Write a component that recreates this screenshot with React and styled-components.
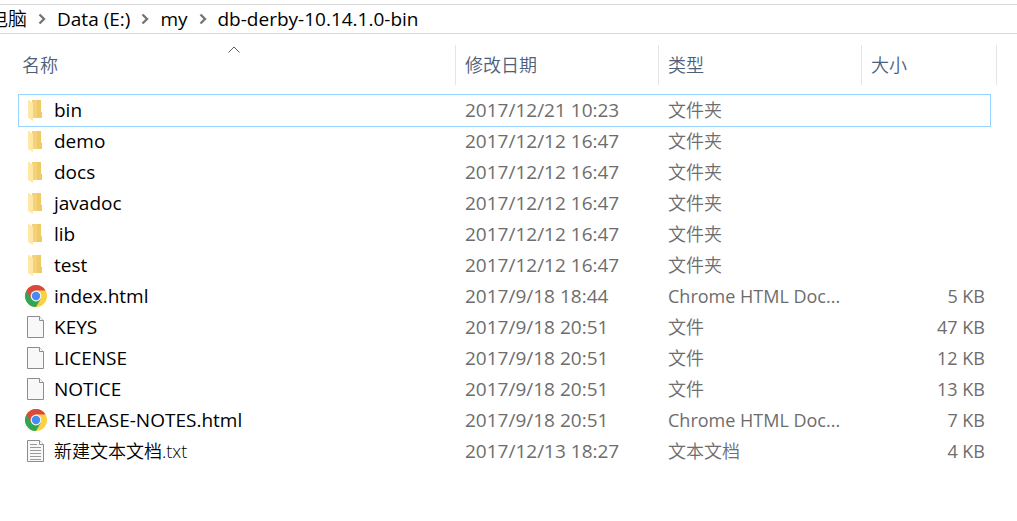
import React from 'react';
import styled, {createGlobalStyle} from 'styled-components';

const GlobalStyle = createGlobalStyle`
body{
margin:0;
background:#fff;
font-family:'Open Sans','Noto Sans CJK SC',sans-serif;
font-size:18px;
line-height:30px;
}
`;
const Window = styled.main`
padding-top:4px;
overflow:hidden;
`;
const AddressBar = styled.nav`
display:flex;
align-items:center;
gap:11px;
height:28px;
margin-bottom:11px;
border-top:1px solid #d9d9d9;
border-bottom:1px solid #d9d9d9;
font-size:19px;
line-height:28px;
overflow:hidden;
`;
const Crumb = styled.button`
flex:none;
padding:0;
border:0;
background:none;
color:#000;
font:inherit;
white-space:nowrap;
cursor:pointer;
&:first-child{
margin-left:-11px;
font-weight:350;
}
`;
const Files = styled.table`
display:block;
margin:0 20px 0 13px;
`;
const Head = styled.thead`
display:block;
margin-bottom:10px;
`;
const Body = styled.tbody`
display:block;
margin:0 7px 0 6px;
`;
const HeadRow = styled.tr`
display:grid;
grid-template-columns:443px 203px 203px 1fr;
height:40px;
`;
const HeadCell = styled.th`
position:relative;
box-sizing:border-box;
padding:5px 9px;
border-right:1px solid #e5e5e5;
color:#4c607a;
font-weight:350;
text-align:left;
`;
const SortMark = styled.svg`
position:absolute;
top:1px;
left:50%;
margin-left:-6px;
`;
const Row = styled.tr`
display:grid;
grid-template-columns:437px 203px 203px 1fr;
height:31px;
outline:${({$selected}) => $selected ? '1px solid #99d1ff' : 'none'};
`;
const Cell = styled.td`
box-sizing:border-box;
padding:0 9px;
color:#6d6d6d;
font-size:18px;
font-weight:${({$latin}) => $latin ? 400 : 350};
white-space:nowrap;
`;
const NameCell = styled(Cell)`
display:flex;
gap:6px;
padding:0 5px;
color:#000;
font-size:${({$latin}) => $latin ? '19px' : '18px'};
`;
const DateCell = styled(Cell)`
font-size:19px;
`;
const SizeCell = styled(Cell)`
padding:0 5px;
text-align:right;
`;
const Icon = styled.svg`
flex:none;
width:24px;
height:24px;
margin-top:3px;
`;

const Chevron = () => (
    <svg width="8" height="12" viewBox="0 0 8 12" aria-hidden="true">
        <path d="M1.5 1.5 6 6 1.500 10.500" fill="none" stroke="#767676" strokeWidth="2.4"/>
    </svg>
);

const FolderIcon = () => (
    <Icon viewBox="0 0 24 24" aria-hidden="true">
        <path d="M8 2h8v11l2 1v6H8z" fill="#f5d27a"/>
        <path d="M13 2h4v12h1v6h-5z" fill="#efcb68"/>
        <path d="M4 2h1l4 3v18l-5-3z" fill="#ffe8a6"/>
    </Icon>
);

const ChromeIcon = () => (
    <Icon viewBox="0 0 24 24" aria-hidden="true">
        <circle cx="12" cy="12" r="11" fill="#fdd042"/>
        <path d="M12 12 2.470 6.500A11 11 0 0 0 12 23l4.760-8.250z" fill="#2fa652"/>
        <path d="M12 12 7.240 14.750 2.470 6.500A11 11 0 0 1 21.530 6.500H12z" fill="#d94a3d"/>
        <circle cx="12" cy="12" r="5.400" fill="#f4f7fb"/>
        <circle cx="12" cy="12" r="4.200" fill="#4a8af4"/>
    </Icon>
);

const PageIcon = ({lines}) => (
    <Icon viewBox="0 0 24 24" aria-hidden="true">
        <path d="M3.500 1.500h12l4 4v17h-16z" fill="#f8f8f8" stroke="#8c8c8c"/>
        <path d="M15.500 1.500v4h4" fill="#fff" stroke="#8c8c8c"/>
        {lines && <path d="M6 5.500h7M6 8.500h11M6 11.500h11M6 14.500h11M6 17.500h11M6 20.500h11" stroke="#999"/>}
    </Icon>
);

const icons = {
    folder: <FolderIcon/>,
    chrome: <ChromeIcon/>,
    file: <PageIcon/>,
    text: <PageIcon lines/>
};
const types = {
    folder: '文件夹',
    chrome: 'Chrome HTML Doc...',
    file: '文件',
    text: '文本文档'
};
const path = ['电脑', 'Data (E:)', 'my', 'db-derby-10.14.1.0-bin'];
const files = [
    {name: 'bin', date: '2017/12/21 10:23', kind: 'folder', selected: true},
    {name: 'demo', date: '2017/12/12 16:47', kind: 'folder'},
    {name: 'docs', date: '2017/12/12 16:47', kind: 'folder'},
    {name: 'javadoc', date: '2017/12/12 16:47', kind: 'folder'},
    {name: 'lib', date: '2017/12/12 16:47', kind: 'folder'},
    {name: 'test', date: '2017/12/12 16:47', kind: 'folder'},
    {name: 'index.html', date: '2017/9/18 18:44', kind: 'chrome', size: '5 KB'},
    {name: 'KEYS', date: '2017/9/18 20:51', kind: 'file', size: '47 KB'},
    {name: 'LICENSE', date: '2017/9/18 20:51', kind: 'file', size: '12 KB'},
    {name: 'NOTICE', date: '2017/9/18 20:51', kind: 'file', size: '13 KB'},
    {name: 'RELEASE-NOTES.html', date: '2017/9/18 20:51', kind: 'chrome', size: '7 KB'},
    {name: '新建文本文档.txt', date: '2017/12/13 18:27', kind: 'text', size: '4 KB'}
];

const FileRow = ({name, date, kind, size, selected}) => (
    <Row $selected={selected}>
        <NameCell $latin={kind !== 'text'}>{icons[kind]}<span>{name}</span></NameCell>
        <DateCell $latin>{date}</DateCell>
        <Cell $latin={kind === 'chrome'}>{types[kind]}</Cell>
        <SizeCell $latin>{size}</SizeCell>
    </Row>
);

export default function App() {
    return (
        <Window>
            <GlobalStyle/>
            <AddressBar>
                {path.map((part, index) => (
                    <React.Fragment key={part}>
                        {index > 0 && <Chevron/>}
                        <Crumb type="button">{part}</Crumb>
                    </React.Fragment>
                ))}
            </AddressBar>
            <Files>
                <Head>
                    <HeadRow>
                        <HeadCell>
                            名称
                            <SortMark width="12" height="7" viewBox="0 0 12 7" aria-hidden="true">
                                <path d="M.5 6.500 6 1l5.500 5.500" fill="none" stroke="#5f5f5f"/>
                            </SortMark>
                        </HeadCell>
                        <HeadCell>修改日期</HeadCell>
                        <HeadCell>类型</HeadCell>
                        <HeadCell>大小</HeadCell>
                    </HeadRow>
                </Head>
                <Body>
                    {files.map(file => <FileRow key={file.name} {...file}/>)}
                </Body>
            </Files>
        </Window>
    );
}
